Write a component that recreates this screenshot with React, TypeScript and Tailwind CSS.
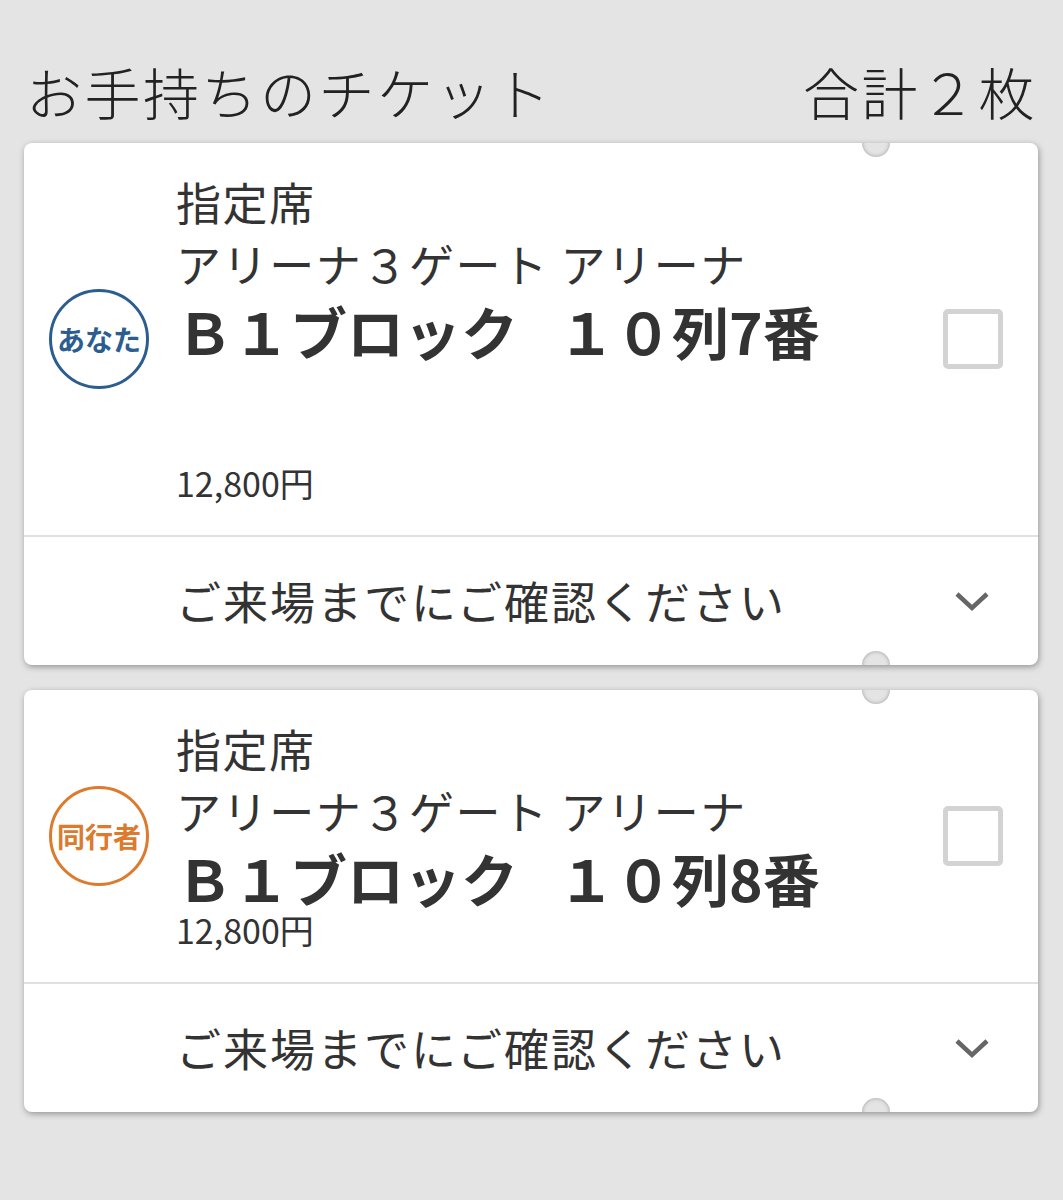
import React from "react";

const jp = { fontFamily: '"Noto Sans CJK JP", "Noto Sans", sans-serif' };

function Notch({ side }: { side: "top" | "bottom" }) {
  return (
    <div
      className={`absolute left-[838px] h-[14px] w-[28px] overflow-hidden ${
        side === "top" ? "top-0" : "bottom-0"
      }`}
    >
      <div
        className={`absolute left-0 h-[28px] w-[28px] rounded-full bg-[#e4e4e4] shadow-[inset_0_0_4px_rgba(0,0,0,0.3)] ${
          side === "top" ? "-top-[14px]" : "top-0"
        }`}
      />
    </div>
  );
}

function Badge({ label, tone }: { label: string; tone: "you" | "companion" }) {
  const cls =
    tone === "you"
      ? "border-[#2c5d90] text-[#2c5d90]"
      : "border-[#dc7a2e] text-[#dc7a2e]";
  return (
    <div
      className={`flex h-[100px] w-[100px] shrink-0 items-center justify-center rounded-full border-[3px] bg-white text-[28px] font-bold ${cls}`}
    >
      {label}
    </div>
  );
}

function Ticket({
  badge,
  tone,
  seatNo,
  tall,
}: {
  badge: string;
  tone: "you" | "companion";
  seatNo: string;
  tall?: boolean;
}) {
  return (
    <div className="relative rounded-[8px] bg-white shadow-[1px_2px_6px_rgba(0,0,0,0.35)]">
      <Notch side="top" />
      <Notch side="bottom" />
      <div className="flex items-center">
        <div className="ml-[25px] mr-[27px]">
          <Badge label={badge} tone={tone} />
        </div>
        <div className="flex-1 pb-[34px] pt-[28px] text-[#333]">
          <div className="text-[45px] leading-[62px] tracking-[1.5px]">指定席</div>
          <div className="text-[45px] leading-[62px] tracking-[1.6px]">
            アリーナ３ゲート アリーナ
          </div>
          <div className="text-[57px] font-bold leading-[70px]">
            Ｂ１ブロック<span className="ml-[40px]">１０列{seatNo}番</span>
          </div>
          <div
            className={`text-[34px] leading-[36px] ${tall ? "mt-[100px]" : ""}`}
          >
            12,800円
          </div>
        </div>
        <div className="mr-[35px] h-[60px] w-[60px] rounded-[5px] border-[5px] border-[#d3d3d3]" />
      </div>
      <div className="flex h-[130px] items-center border-t-2 border-[#e0e0e0] pl-[152px] pr-[48px]">
        <div className="flex-1 text-[45px] tracking-[2px] text-[#333]">
          ご来場までにご確認ください
        </div>
        <svg width="36" height="22" viewBox="0 0 36 22">
          <polyline
            points="3,4 18,18 33,4"
            fill="none"
            stroke="#666"
            strokeWidth="4.5"
          />
        </svg>
      </div>
    </div>
  );
}

export default function App() {
  return (
    <div className="min-h-[1200px] w-[1063px] bg-[#e4e4e4]" style={jp}>
      <div className="flex items-center justify-between pl-[26px] pr-[26px] pt-[63px] pb-[24px] text-[56px] font-light leading-none tracking-[2.5px] text-[#222]">
        <span>お手持ちのチケット</span>
        <span>合計２枚</span>
      </div>
      <div className="flex flex-col gap-[25px] pl-[24px] pr-[25px]">
        <Ticket badge="あなた" tone="you" seatNo="7" tall />
        <Ticket badge="同行者" tone="companion" seatNo="8" />
      </div>
    </div>
  );
}
